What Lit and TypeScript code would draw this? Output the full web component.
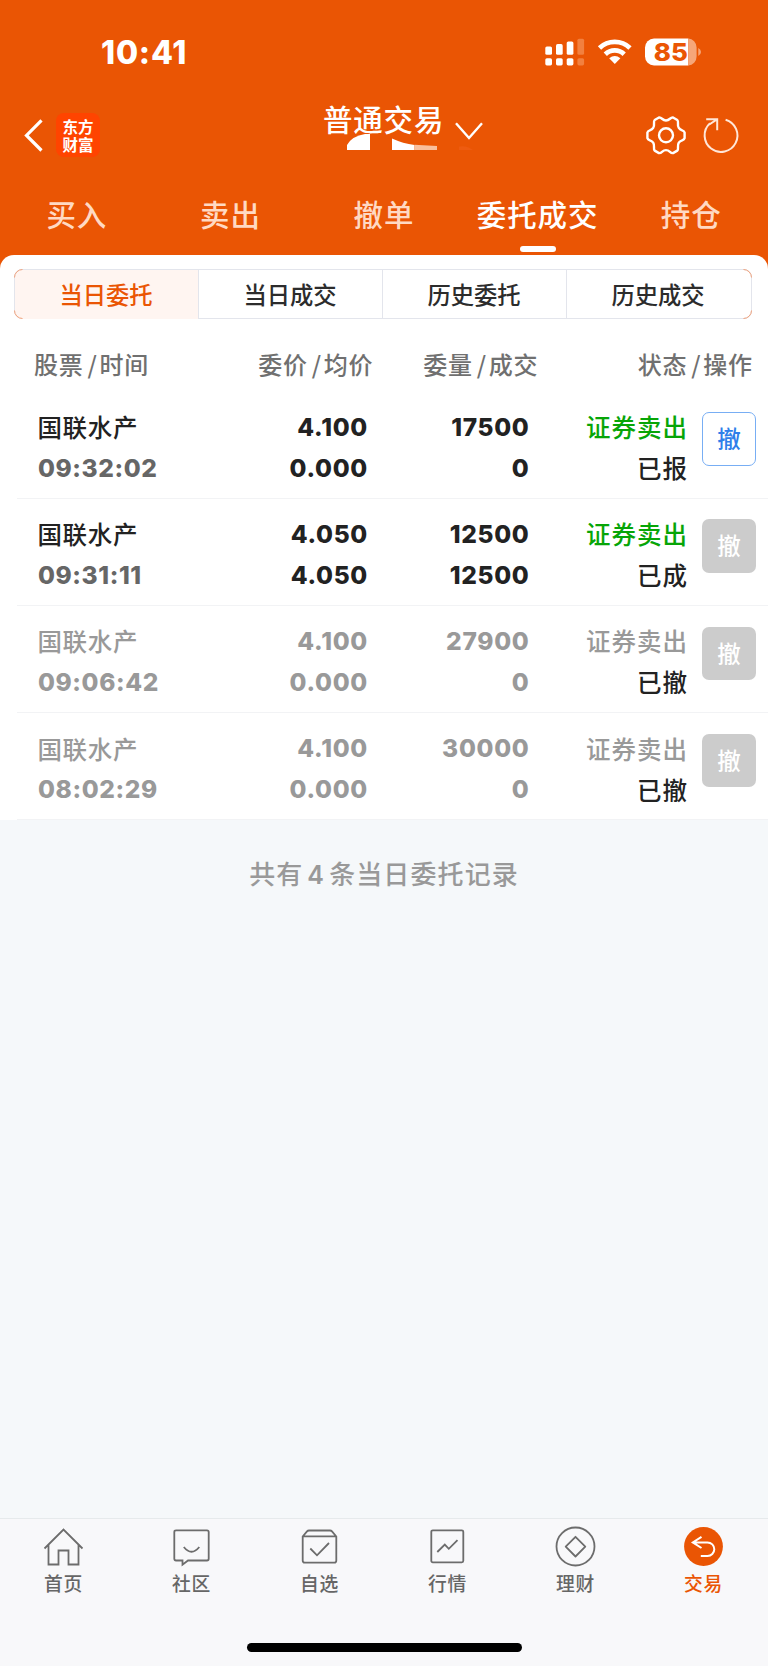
import { LitElement, html, svg, css } from "lit";
import { customElement, property } from "lit/decorators.js";
import { classMap } from "lit/directives/class-map.js";

interface Order {
  name: string;
  time: string;
  price: string;
  avg: string;
  qty: string;
  filled: string;
  state: string;
  muted: boolean;
  cancellable: boolean;
}

const ORDERS: Order[] = [
  { name: "国联水产", time: "09:32:02", price: "4.100", avg: "0.000", qty: "17500", filled: "0", state: "已报", muted: false, cancellable: true },
  { name: "国联水产", time: "09:31:11", price: "4.050", avg: "4.050", qty: "12500", filled: "12500", state: "已成", muted: false, cancellable: false },
  { name: "国联水产", time: "09:06:42", price: "4.100", avg: "0.000", qty: "27900", filled: "0", state: "已撤", muted: true, cancellable: false },
  { name: "国联水产", time: "08:02:29", price: "4.100", avg: "0.000", qty: "30000", filled: "0", state: "已撤", muted: true, cancellable: false },
];

const TABS = ["买入", "卖出", "撤单", "委托成交", "持仓"];
const SEGMENTS = ["当日委托", "当日成交", "历史委托", "历史成交"];

const NAV = [
  { label: "首页", icon: svg`<path d="M1.5 21.5 20.5 2.5 39.5 21.5M5.5 18V37.5H15.5V23.5H25.5V37.5H35.5V18"/>` },
  { label: "社区", icon: svg`<path d="M4.5 3.3H36Q37.7 3.3 37.7 5V31.8Q37.7 33.5 36 33.5H17L11.5 37.7V33.5H5Q3.3 33.5 3.3 31.8V5Q3.3 3.3 5 3.3ZM12.8 20Q20.5 29.5 28.3 20"/>` },
  { label: "自选", icon: svg`<path d="M3.7 9.5V33.5Q3.7 35.7 5.9 35.7H35.3Q37.3 35.7 37.3 33.5V9.5L33 4.4Q32.2 3.5 31 3.5H10Q8.8 3.5 8 4.4ZM3.7 9.3H37.3M11.3 21.5 18 28.3 30 16"/>` },
  { label: "行情", icon: svg`<rect x="4.3" y="3.3" width="32" height="32" rx="1.5"/><path d="M10.3 25 17.8 17.6 21.8 21.8 30.5 13.2"/>` },
  { label: "理财", icon: svg`<circle cx="20.5" cy="19.5" r="19"/><path d="M20.5 9.8 30.3 19.7 20.5 29.5 10.7 19.7Z" stroke-linejoin="round"/>` },
  { label: "交易", icon: svg`<circle cx="20.5" cy="19.5" r="19.4" fill="#ea5504" stroke="none"/><path d="M18.5 9.8 9.8 15.4 18.5 21M9.8 15.4H24.5A6.6 6.6 0 0 1 24.5 29H17.8" stroke="#fff" stroke-width="2"/>` },
];

@customElement("order-row")
class OrderRow extends LitElement {
  @property({ attribute: false }) order!: Order;

  static styles = css`
    :host { display: block; }
    .row { display: grid; grid-template-columns: 187px 142px 161.5px 158px 53.5px; height: 106.2px; margin-left: 17px; padding-left: 21px; border-bottom: 1px solid #f2f3f5; color: #222; }
    .col { display: flex; flex-direction: column; padding-top: 14.4px; text-align: right; white-space: nowrap; }
    .first { text-align: left; }
    .name, .side, .state { font-size: 24.5px; font-weight: 500; line-height: 41.1px; letter-spacing: 0.7px; margin: 0 -1.4px 0 -0.6px; }
    .side, .state { letter-spacing: 1px; margin-right: -1.5px; }
    .num { font: 800 24.5px/41.1px Inter, sans-serif; letter-spacing: 0.7px; margin-right: -1px; position: relative; top: 0.8px; }
    .time { color: #666; letter-spacing: 0.6px; }
    .side { color: #07a507; }
    .muted .name, .muted .num, .muted .side { color: #999; }
    .cancel { box-sizing: border-box; width: 53.5px; height: 53.5px; margin: 20.6px 0 0 15.7px; border-radius: 7px; background: #ccc; color: #fff; font-size: 23.5px; font-weight: 500; line-height: 53px; text-align: center; }
    .live { background: #fff; color: #2f7fea; border: 1.5px solid #78aef4; line-height: 50px; }
  `;

  render() {
    const o = this.order;
    return html`
      <div class=${classMap({ row: true, muted: o.muted })}>
        <div class="col first"><span class="name">${o.name}</span><span class="num time">${o.time}</span></div>
        <div class="col"><span class="num">${o.price}</span><span class="num">${o.avg}</span></div>
        <div class="col"><span class="num">${o.qty}</span><span class="num">${o.filled}</span></div>
        <div class="col"><span class="side">证券卖出</span><span class="state">${o.state}</span></div>
        <div class=${classMap({ cancel: true, live: o.cancellable })}>撤</div>
      </div>
    `;
  }
}

@customElement("app-root")
class AppRoot extends LitElement {
  static styles = css`
    :host { display: block; width: 768px; font-family: "Noto Sans CJK SC", sans-serif; }
    svg { display: block; overflow: visible; }
    .page { display: flex; flex-direction: column; height: 1666px; background: #f5f8fa; overflow: hidden; }
    .top { background: #ea5504; height: 270px; flex: none; color: #fff; }
    .status { display: flex; height: 103px; align-items: center; padding-left: 101px; }
    .clock { font: 800 32px/40px Inter, sans-serif; letter-spacing: 0.8px; width: 444px; padding-top: 2px; }
    .bar { display: flex; height: 64px; align-items: center; }
    .back { margin-left: 24px; }
    .logo { display: flex; flex-direction: column; justify-content: center; width: 44px; height: 44px; margin-left: 12px; border-radius: 8px; background: #ff4400; font-size: 15.5px; font-weight: 700; line-height: 18.5px; text-align: center; }
    .title { display: flex; margin-left: 223px; width: 322.5px; height: 64px; position: relative; }
    .title-text { font-size: 29.5px; font-weight: 500; line-height: 31px; letter-spacing: 0.8px; }
    .down { margin: 17.5px 0 0 10.5px; }
    .smudge { position: absolute; left: 24px; top: 30px; }
    .reload { margin-left: 18.5px; }
    .tabs { display: grid; grid-template-columns: repeat(5, 1fr); height: 87px; }
    .tab { display: flex; flex-direction: column; align-items: center; padding-top: 26px; font-size: 29.5px; font-weight: 500; line-height: 40px; letter-spacing: 0.9px; color: #ffd9c3; }
    .tab.on { color: #fff; }
    .line { width: 36px; height: 6px; border-radius: 3px; background: #fff; margin-top: 13px; }
    .panel { background: #fff; border-radius: 14px 14px 0 0; margin-top: -15.5px; padding-top: 14.5px; flex: none; }
    .segments { display: grid; grid-template-columns: repeat(4, 1fr); margin: 0 16px 0 14px; height: 48px; border: 1px solid #e3e5ec; border-radius: 8px; position: relative; }
    .seg { font-size: 23.3px; font-weight: 500; line-height: 48.5px; text-align: center; color: #2c2c2c; border-right: 1px solid #e3e5ec; padding-right: 1px; }
    .seg:nth-child(4) { border-right: 0; padding-right: 2px; }
    .seg.on { color: #ea5504; background: #fff5f1; border-radius: 7px 0 0 7px; }
    .corners { position: absolute; left: -1px; top: -1px; }
    .head { display: grid; grid-template-columns: 186px 153.2px 165px 214.5px; padding-left: 34px; height: 72.6px; line-height: 90px; font-size: 24px; font-weight: 500; letter-spacing: 0.7px; color: #707070; text-align: right; }
    .head span:first-child { text-align: left; }
    .head .slash { margin: 0 2px 0 4px; }
    .total { flex: 1; padding-top: 32.6px; text-align: center; color: #999; font-size: 26px; font-weight: 500; line-height: 40px; letter-spacing: 1.1px; }
    .count { font: 600 25px Inter, sans-serif; margin: 0 4px 0 4px; }
    .nav { display: grid; grid-template-columns: repeat(6, 1fr); height: 148px; box-sizing: border-box; border-top: 1px solid #e6eaec; background: #f8f8fa; position: relative; }
    .item { display: flex; flex-direction: column; align-items: center; padding: 8px 1px 0 0; font-size: 18.8px; font-weight: 500; line-height: 28px; letter-spacing: 0.8px; color: #666; }
    .item svg { fill: none; stroke: #6c6c6c; stroke-width: 1.8; margin-bottom: 2px; }
    .item.on { color: #ea5504; }
    .home { position: absolute; left: 246.5px; top: 124px; width: 275.5px; height: 9px; border-radius: 5px; background: #000; }
  `;

  render() {
    return html`
      <div class="page">
        <div class="top">
          <div class="status">
            <span class="clock">10:41</span>
            <svg width="160" height="30" viewBox="545 36.5 160 30">
              <g fill="#fff">
                <rect x="545.3" y="46" width="6.7" height="8.3" rx="1.6"/><rect x="556" y="43.6" width="6.7" height="10.7" rx="1.6"/><rect x="566.7" y="41" width="6.7" height="13.3" rx="1.6"/>
                <rect x="545.3" y="57.7" width="6.7" height="7.2" rx="1.6"/><rect x="556" y="57.7" width="6.7" height="7.2" rx="1.6"/><rect x="566.7" y="57.7" width="6.7" height="7.2" rx="1.6"/>
              </g>
              <g fill="#f2803f"><rect x="577.4" y="38.2" width="6.7" height="16.1" rx="1.6"/><rect x="577.4" y="57.7" width="6.7" height="7.2" rx="1.6"/></g>
              <path d="M599.5 47.5A22 22 0 0 1 630 47.5M605.3 53.7A13.5 13.5 0 0 1 624.2 53.7" fill="none" stroke="#fff" stroke-width="4.7"/>
              <path d="M609.2 57.8Q614.8 53.2 620.4 57.8L614.8 63.5Z" fill="#fff"/>
              <path d="M654 38H688.3V65H654A9 9 0 0 1 645 56V47A9 9 0 0 1 654 38Z" fill="#fff"/>
              <path d="M688.3 38A8.3 9 0 0 1 696.6 47V56A8.3 9 0 0 1 688.3 65ZM698.3 47.5Q701 49 701 51.5T698.3 55.5Z" fill="#f6a679"/>
              <text x="653.8" y="60.3" font-family="Inter" font-weight="800" font-size="24.5" textLength="34" lengthAdjust="spacingAndGlyphs" fill="#ea5504">85</text>
            </svg>
          </div>
          <div class="bar">
            <svg class="back" width="20" height="34" viewBox="0 0 20 34"><path d="M17.5 2.3 2.5 17.5 17.5 32.5" fill="none" stroke="#fff" stroke-width="3.2"/></svg>
            <div class="logo"><span>东方</span><span>财富</span></div>
            <div class="title">
              <span class="title-text">普通交易</span>
              <svg class="down" width="28" height="20" viewBox="0 0 28 20"><path d="M1 2.2 14 17 27 2.2" fill="none" stroke="#fff" stroke-width="2.4"/></svg>
              <svg class="smudge" width="130" height="18" viewBox="0 0 130 18">
                <path d="M0 17V12Q5 3 18 1H23V17Z" fill="#fff"/><path d="M45 17V5.5Q56 10.5 67.5 12V17Z" fill="#fff"/><path d="M67.5 11.8 90 13V17H67.5Z" fill="#f9bf9d"/><path d="M112 17V13.5Q120 12 126 17Z" fill="#ee5b10"/>
              </svg>
            </div>
            <svg width="40" height="40" viewBox="-20 -20.3 40 40" fill="none" stroke="#fff" stroke-width="2.4">
              <path stroke-linejoin="round" d="M-7 -17.8C-4 -18.2 -4 -14.8 0 -14.8S4 -18.2 7 -17.8L11.3 -15.3C13.2 -13.4 10.7 -10.7 12.8 -7.4S17.8 -5.8 18.6 -2.8V2.8C17.8 5.8 14.9 4.1 12.8 7.4S13.2 13.4 11.3 15.3L7 17.8C4 18.2 4 14.8 0 14.8S-4 18.2 -7 17.8L-11.3 15.3C-13.2 13.4 -10.7 10.7 -12.8 7.4S-17.8 5.8 -18.6 2.8V-2.8C-17.8 -5.8 -14.9 -4.1 -12.8 -7.4S-13.2 -13.4 -11.3 -15.3Z"/><circle r="7"/>
            </svg>
            <svg class="reload" width="36" height="40" viewBox="0 0 36 40"><path d="M6 8.3A16.4 16.4 0 1 0 21.6 4.7M2.2 4.2H13.2V15.2M13 4.4 5.3 9.5" fill="none" stroke="#ffe6d8" stroke-width="2"/></svg>
          </div>
          <div class="tabs">
            ${TABS.map((t, i) => html`<div class=${classMap({ tab: true, on: i === 3 })}>${t}${i === 3 ? html`<div class="line"></div>` : ""}</div>`)}
          </div>
        </div>
        <div class="panel">
          <div class="segments">
            ${SEGMENTS.map((s, i) => html`<div class=${classMap({ seg: true, on: i === 0 })}>${s}</div>`)}
            <svg class="corners" width="738" height="50" viewBox="0 0 738 50"><path d="M.5 8.5A8 8 0 0 1 8.5.5M.5 41.5A8 8 0 0 0 8.5 49.5M729.5.5A8 8 0 0 1 737.5 8.5M737.5 41.5A8 8 0 0 1 729.5 49.5" fill="none" stroke="#f0a27c"/></svg>
          </div>
          <div class="head">
            <span>股票<span class="slash">/</span>时间</span><span>委价<span class="slash">/</span>均价</span><span>委量<span class="slash">/</span>成交</span><span>状态<span class="slash">/</span>操作</span>
          </div>
          ${ORDERS.map((o) => html`<order-row .order=${o}></order-row>`)}
        </div>
        <div class="total">共有<span class="count">4</span>条当日委托记录</div>
        <div class="nav">
          ${NAV.map((n, i) => html`<div class=${classMap({ item: true, on: i === 5 })}><svg width="41" height="40" viewBox="0 0 41 40">${n.icon}</svg>${n.label}</div>`)}
          <div class="home"></div>
        </div>
      </div>
    `;
  }
}
